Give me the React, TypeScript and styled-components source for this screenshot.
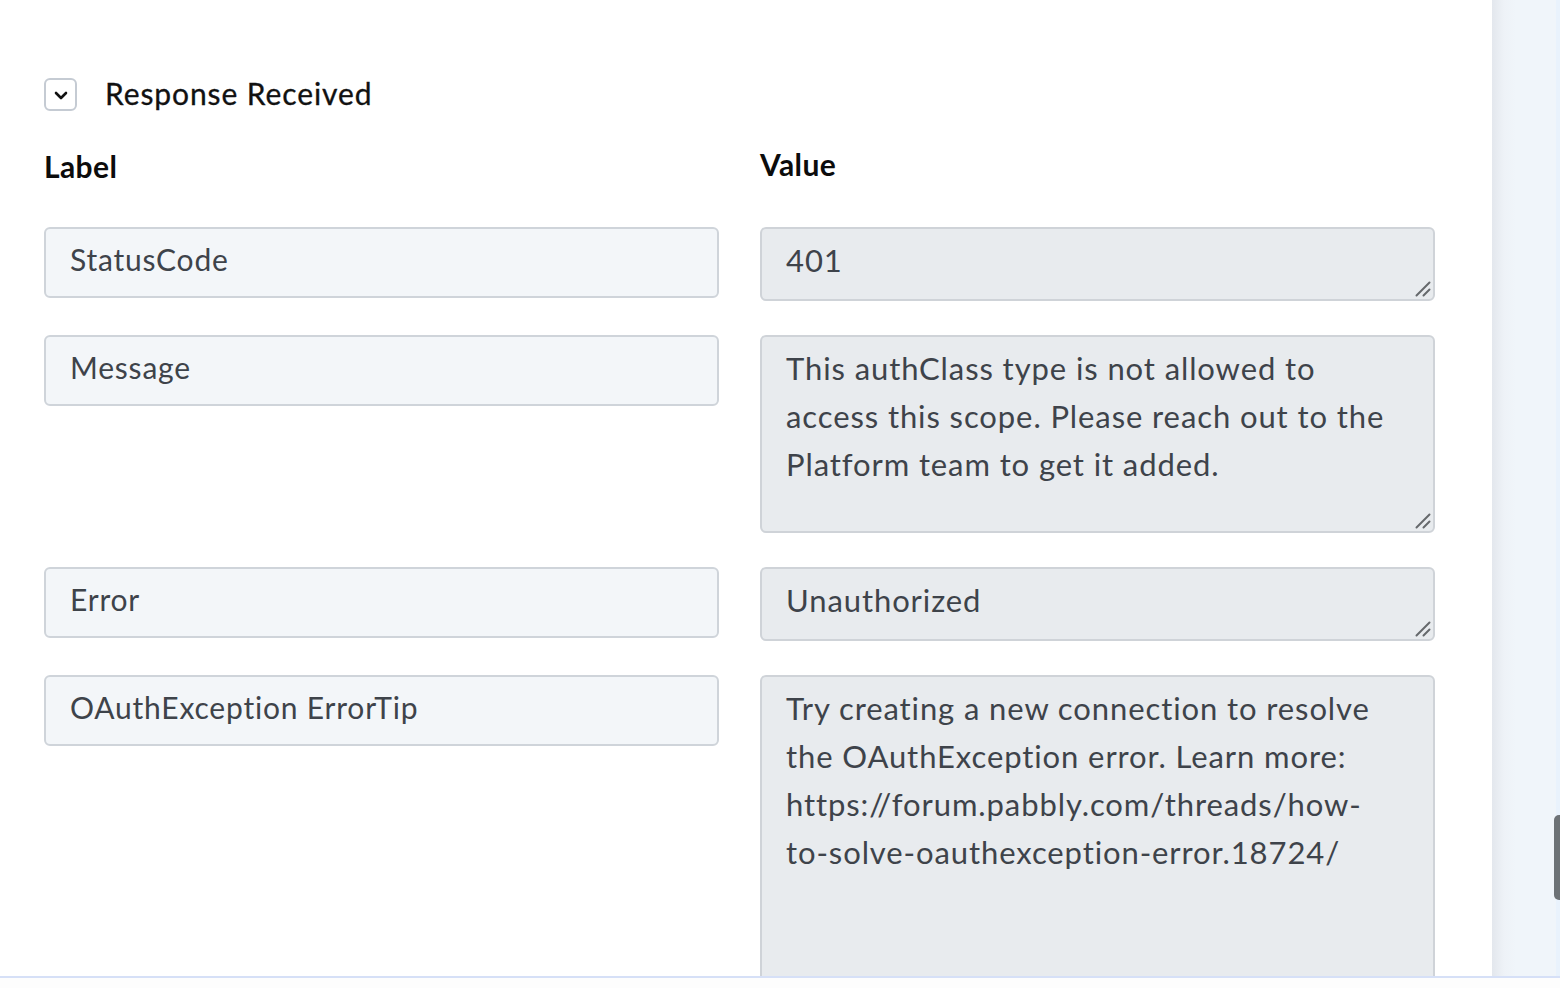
import React from 'react';
import styled, { createGlobalStyle } from 'styled-components';

const GlobalStyle = createGlobalStyle`
  html, body {
    margin: 0;
    padding: 0;
    background: #ffffff;
  }
  body {
    font-family: Lato, 'Open Sans', 'Noto Sans', sans-serif;
    color: #111;
    overflow: hidden;
  }
`;

const Page = styled.div`
  height: 988px;
  display: flex;
  flex-direction: column;
  background: #fdfdfd;
`;

const Frame = styled.div`
  height: 976px;
  display: flex;
  border-bottom: 2px solid #d6e0f7;
  background: #ffffff;
  flex-shrink: 0;
`;

const Main = styled.main`
  flex: 1;
  overflow: hidden;
  padding: 78px 57px 0 44px;
`;

const SidePanel = styled.aside`
  position: relative;
  width: 68px;
  background: linear-gradient(90deg, #e3e7ed 0px, #eef2f7 12px, #f0f5fa 24px);
  &::after {
    content: '';
    position: absolute;
    top: 0;
    right: 0;
    bottom: 0;
    width: 4px;
    background: #e9f2fc;
  }
`;

const ScrollThumb = styled.div`
  position: absolute;
  top: 815px;
  right: -4px;
  width: 10px;
  height: 85px;
  border-radius: 5px;
  background: #6d7276;
  z-index: 1;
`;

const SectionHeader = styled.div`
  display: flex;
  align-items: center;
  gap: 28px;
  height: 33px;
`;

const Toggle = styled.button`
  width: 33px;
  height: 33px;
  padding: 0;
  display: flex;
  align-items: center;
  justify-content: center;
  background: #ffffff;
  border: 2px solid #c5cbd3;
  border-radius: 6px;
  cursor: pointer;
`;

const SectionTitle = styled.h2`
  margin: 0 0 4px;
  font-size: 30px;
  font-weight: 400;
  line-height: 36px;
  color: #111;
  letter-spacing: 0.9px;
  -webkit-text-stroke: 0.3px #111;
`;

const Grid = styled.div`
  display: grid;
  grid-template-columns: 675px 675px;
  column-gap: 41px;
  row-gap: 34px;
  margin-top: 31px;
  align-items: start;
`;

const ColumnHeading = styled.div<{ $raise?: number }>`
  font-size: 30px;
  font-weight: 700;
  line-height: 44px;
  color: #0c0c0c;
  letter-spacing: 0.4px;
  align-self: end;
  margin-bottom: ${(p) => 5 + (p.$raise ?? 0)}px;
`;

const LabelInput = styled.input`
  box-sizing: border-box;
  width: 100%;
  height: 71px;
  padding: 0 24px 8px;
  border: 2px solid #cfd4da;
  border-radius: 6px;
  background: #f3f6f9;
  font-family: inherit;
  font-size: 30px;
  letter-spacing: 0.8px;
  color: #3e434a;
  outline: none;
`;

const ValueCell = styled.div`
  position: relative;
`;

const ValueArea = styled.textarea<{ $height: number }>`
  box-sizing: border-box;
  display: block;
  width: 100%;
  height: ${(p) => p.$height}px;
  padding: 7px 24px 15px;
  border: 2px solid #cfd3d8;
  border-radius: 6px;
  background: #e8ebee;
  font-family: inherit;
  font-size: 31px;
  line-height: 48px;
  letter-spacing: 0.9px;
  color: #3e434a;
  resize: none;
  overflow: hidden;
  outline: none;
`;

const Grip = styled.svg`
  position: absolute;
  right: 4px;
  bottom: 4px;
  pointer-events: none;
`;

const ChevronDown = () => (
  <svg width="18" height="18" viewBox="0 0 18 18" fill="none">
    <path d="M4 7 L9 12 L14 7" stroke="#111" strokeWidth="2.6" strokeLinecap="round" strokeLinejoin="round" />
  </svg>
);

const ResizeGrip = () => (
  <Grip width="16" height="16" viewBox="0 0 16 16">
    <path d="M1.5 14.5 L14.5 1.5 M8.5 14.5 L14.5 8.5" stroke="#66696c" strokeWidth="2" strokeLinecap="round" />
  </Grip>
);

const rows = [
  { label: 'StatusCode', value: '401', height: 74 },
  {
    label: 'Message',
    value: 'This authClass type is not allowed to\naccess this scope. Please reach out to the\nPlatform team to get it added.',
    height: 198,
  },
  { label: 'Error', value: 'Unauthorized', height: 74 },
  {
    label: 'OAuthException ErrorTip',
    value:
      'Try creating a new connection to resolve\nthe OAuthException error. Learn more:\nhttps://forum.pabbly.com/threads/how-\nto-solve-oauthexception-error.18724/',
    height: 330,
  },
];

export default function App() {
  return (
    <>
      <GlobalStyle />
      <Page>
        <Frame>
          <Main>
            <SectionHeader>
              <Toggle aria-label="Collapse">
                <ChevronDown />
              </Toggle>
              <SectionTitle>Response Received</SectionTitle>
            </SectionHeader>
            <Grid>
              <ColumnHeading>Label</ColumnHeading>
              <ColumnHeading $raise={2}>Value</ColumnHeading>
              {rows.map((row) => (
                <React.Fragment key={row.label}>
                  <LabelInput readOnly defaultValue={row.label} />
                  <ValueCell>
                    <ValueArea readOnly $height={row.height} defaultValue={row.value} />
                    <ResizeGrip />
                  </ValueCell>
                </React.Fragment>
              ))}
            </Grid>
          </Main>
          <SidePanel>
            <ScrollThumb />
          </SidePanel>
        </Frame>
      </Page>
    </>
  );
}
